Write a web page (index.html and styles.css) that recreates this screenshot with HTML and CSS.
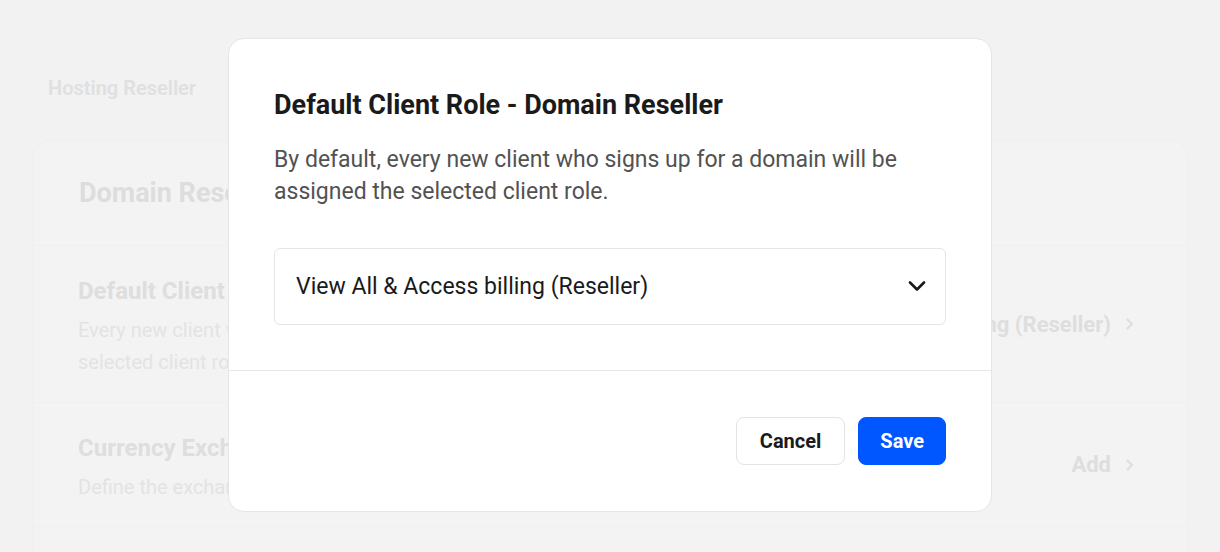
FILE: index.html
```html
<!DOCTYPE html>
<html lang="en">
<head>
<meta charset="utf-8">
<title>Default Client Role</title>
<link rel="stylesheet" href="styles.css">
</head>
<body>
<div class="page">
  <nav class="tabs">
    <span class="tab">Hosting Reseller</span>
  </nav>
  <section class="card">
    <div class="card-head">Domain Reseller</div>
    <div class="row row-tall">
      <div class="row-text">
        <div class="row-title">Default Client Role</div>
        <div class="row-desc">Every new client who signs up for a domain will be assigned the<br>selected client role.</div>
      </div>
      <div class="row-value">View All &amp; Access billing (Reseller)
        <svg class="chev-r" width="10" height="12" viewBox="0 0 10 12"><path d="M2.5 1.5 L7 6 L2.5 10.5" fill="none" stroke="currentColor" stroke-width="2.2" stroke-linecap="round" stroke-linejoin="round"/></svg>
      </div>
    </div>
    <div class="row">
      <div class="row-text">
        <div class="row-title">Currency Exchange Rates</div>
        <div class="row-desc">Define the exchange rates for the currencies you sell in.</div>
      </div>
      <div class="row-value">Add
        <svg class="chev-r" width="10" height="12" viewBox="0 0 10 12"><path d="M2.5 1.5 L7 6 L2.5 10.5" fill="none" stroke="currentColor" stroke-width="2.2" stroke-linecap="round" stroke-linejoin="round"/></svg>
      </div>
    </div>
    <div class="row"></div>
  </section>
</div>

<div class="overlay">
  <div class="modal" role="dialog" aria-labelledby="mtitle">
    <div class="modal-body">
      <h2 class="modal-title" id="mtitle">Default Client Role - Domain Reseller</h2>
      <p class="modal-desc">By default, every new client who signs up for a domain will be assigned the selected client role.</p>
      <div class="select">
        <span class="select-text">View All &amp; Access billing (Reseller)</span>
        <svg class="chev-d" width="18" height="12" viewBox="0 0 18 12"><path d="M2 2.5 L9 9.5 L16 2.5" fill="none" stroke="currentColor" stroke-width="2.6" stroke-linecap="round" stroke-linejoin="round"/></svg>
      </div>
    </div>
    <div class="modal-foot">
      <button class="btn btn-cancel" type="button">Cancel</button>
      <button class="btn btn-save" type="button">Save</button>
    </div>
  </div>
</div>
</body>
</html>
```

FILE: styles.css
```css
* { box-sizing: border-box; }
html, body { margin: 0; padding: 0; }
body {
  background: #f2f2f2;
  font-family: Roboto, "Noto Sans", "Liberation Sans", sans-serif;
  width: 1220px;
  height: 552px;
  overflow: hidden;
  position: relative;
}

/* background page (dimmed) */
.page {
  padding: 70px 32px 0 33px;
}
.tabs {
  display: flex;
  gap: 48px;
  padding-left: 15px;
  height: 35px;
  align-items: center;
}
.tab {
  font-size: 20px;
  font-weight: 600;
  color: #e0e0e0;
}
.card {
  margin-top: 35px;
  background: #f3f3f3;
  border: 1px solid #efefef;
  border-radius: 16px;
}
.card-head {
  height: 105px;
  padding: 0 45px;
  display: flex;
  align-items: center;
  font-size: 27px;
  font-weight: 700;
  color: #dddddd;
  border-bottom: 1px solid #efefef;
}
.row {
  display: flex;
  justify-content: space-between;
  align-items: center;
  padding: 0 52px 0 44px;
  height: 124px;
  border-bottom: 1px solid #efefef;
}
.row-tall { height: 157px; }
.row-text {
  align-self: flex-start;
  padding-top: 30px;
}
.row-title {
  font-size: 24px;
  font-weight: 700;
  color: #dedede;
  line-height: 30px;
}
.row-desc {
  font-size: 20px;
  color: #e3e3e3;
  line-height: 32px;
  margin-top: 8px;
}
.row-value {
  display: flex;
  align-items: center;
  gap: 14px;
  font-size: 22px;
  font-weight: 700;
  color: #dedede;
}
.chev-r { color: #dedede; }

/* modal */
.overlay {
  position: absolute;
  inset: 0;
  display: flex;
  align-items: center;
  justify-content: center;
  padding-bottom: 3px;
}
.modal {
  width: 764px;
  background: #ffffff;
  border: 1px solid #e6e6e6;
  border-radius: 16px;
}
.modal-body {
  padding: 49px 45px 45px;
}
.modal-title {
  margin: 0;
  font-size: 27px;
  font-weight: 700;
  line-height: 34px;
  color: #1a1a1a;
}
.modal-desc {
  margin: 22px 0 0;
  font-size: 23px;
  line-height: 32px;
  color: #525252;
}
.select {
  margin-top: 40px;
  height: 77px;
  border: 1px solid #e5e5e5;
  border-radius: 6px;
  display: flex;
  align-items: center;
  justify-content: space-between;
  padding: 0 19px 0 21px;
}
.select-text {
  font-size: 23px;
  color: #1a1a1a;
}
.chev-d { color: #1a1a1a; }
.modal-foot {
  border-top: 1px solid #e8e8e8;
  padding: 46px 45px;
  display: flex;
  justify-content: flex-end;
  gap: 13px;
}
.btn {
  height: 48px;
  border-radius: 8px;
  font-family: Roboto, "Noto Sans", "Liberation Sans", sans-serif;
  font-size: 20px;
  font-weight: 700;
  cursor: pointer;
}
.btn-cancel {
  padding: 0 23px;
  background: #ffffff;
  border: 1px solid #e3e3e3;
  color: #1a1a1a;
}
.btn-save {
  padding: 0 21px;
  background: #0057ff;
  border: 1px solid #0057ff;
  color: #ffffff;
}
```
